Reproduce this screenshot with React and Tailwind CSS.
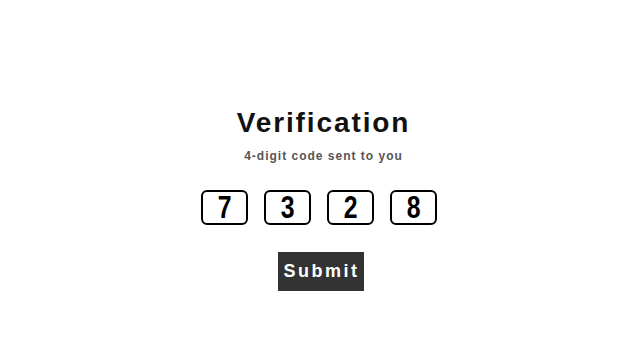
import React from 'react';

const digits = ['7', '3', '2', '8'];

function App() {
  return (
    <div className="w-[641px] h-[360px] bg-white flex flex-col items-center pt-[107px] font-['Liberation_Sans',Arial,sans-serif]">
      {/* Heading */}
      <h1 className="pl-[6px] h-[32px] leading-[32px] text-[28px] font-bold tracking-[1.9px] text-[#111]">
        Verification
      </h1>
      <p className="pl-[6px] mt-[9px] h-[16px] leading-[16px] text-[12px] font-bold tracking-[1px] text-[#555]">
        4-digit code sent to you
      </p>

      {/* Code boxes */}
      <div className="mt-[26px] pr-[3px] flex gap-[16px]">
        {digits.map((d, i) => (
          <div
            key={i}
            className="w-[47px] h-[35px] border-2 border-black rounded-[6px] flex items-center justify-center text-black"
          >
            <span className="inline-block scale-x-[0.8] font-bold text-[31px] leading-none">{d}</span>
          </div>
        ))}
      </div>

      {/* Submit */}
      <button className="mt-[27px] w-[86px] h-[39px] bg-[#333] text-white text-[18px] font-bold tracking-[2.5px] flex items-center justify-center pl-[2px]">
        Submit
      </button>
    </div>
  );
}

export default App;
